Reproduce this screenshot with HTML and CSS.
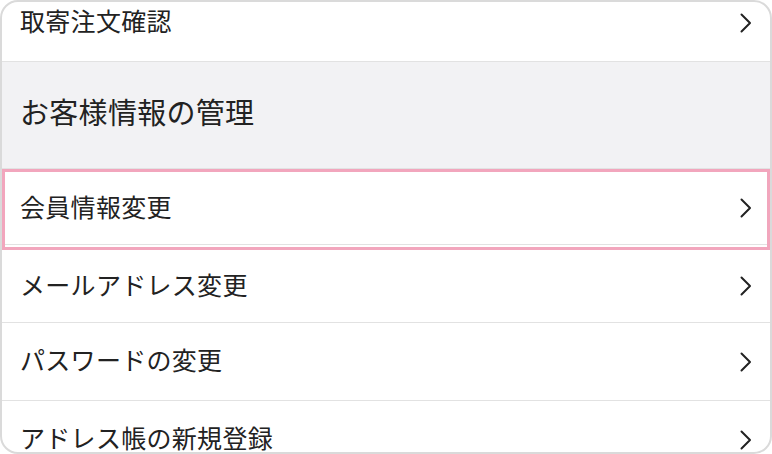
FILE: index.html
```html
<!DOCTYPE html>
<html lang="ja">
<head>
<meta charset="utf-8">
<link rel="stylesheet" href="styles.css">
</head>
<body>
<div class="frame">
  <div class="list">
    <a class="row first"><span class="label">取寄注文確認</span><svg class="chev" viewBox="0 0 12 20"><path d="M1.5 1.5 L10 10 L1.5 18.5"/></svg></a>
    <div class="section">お客様情報の管理</div>
    <div class="focus">
      <a class="row"><span class="label">会員情報変更</span><svg class="chev" viewBox="0 0 12 20"><path d="M1.5 1.5 L10 10 L1.5 18.5"/></svg></a>
    </div>
    <a class="row short"><span class="label">メールアドレス変更</span><svg class="chev" viewBox="0 0 12 20"><path d="M1.5 1.5 L10 10 L1.5 18.5"/></svg></a>
    <a class="row"><span class="label">パスワードの変更</span><svg class="chev" viewBox="0 0 12 20"><path d="M1.5 1.5 L10 10 L1.5 18.5"/></svg></a>
    <a class="row"><span class="label">アドレス帳の新規登録</span><svg class="chev" viewBox="0 0 12 20"><path d="M1.5 1.5 L10 10 L1.5 18.5"/></svg></a>
  </div>
</div>
</body>
</html>
```
FILE: styles.css
```css
html, body {
  margin: 0;
  padding: 0;
  background: #ffffff;
}
body {
  font-family: "Noto Sans CJK JP", "Noto Sans", sans-serif;
  color: #222;
}
.frame {
  width: 772px;
  height: 454px;
  box-sizing: border-box;
  border: 2px solid #dadada;
  border-radius: 18px;
  overflow: hidden;
  background: #fff;
}
.list {
  display: flex;
  flex-direction: column;
  margin-top: -18px;
}
.row {
  display: flex;
  align-items: center;
  justify-content: space-between;
  height: 77px;
  padding: 0 18px 0 18px;
  border-bottom: 1px solid #e2e2e2;
  box-sizing: content-box;
  flex-shrink: 0;
}
.row.short {
  height: 72px;
}
.label {
  font-size: 25px;
  line-height: 1;
  letter-spacing: 0.3px;
  margin-bottom: 4px;
}
.chev {
  width: 12px;
  height: 20px;
  fill: none;
  stroke: #222;
  stroke-width: 2;
  stroke-linecap: round;
  stroke-linejoin: round;
}
.section {
  height: 98px;
  padding-bottom: 8px;
  background: #f2f2f4;
  display: flex;
  align-items: center;
  padding-left: 18px;
  font-size: 29px;
  letter-spacing: 0.3px;
  border-bottom: 1px solid #e2e2e2;
  flex-shrink: 0;
}
.focus {
  border: 3px solid #f2a6bd;
  padding-bottom: 2px;
  flex-shrink: 0;
}
.focus .row {
  height: 72px;
  padding-left: 15px;
  padding-right: 15px;
}
```
